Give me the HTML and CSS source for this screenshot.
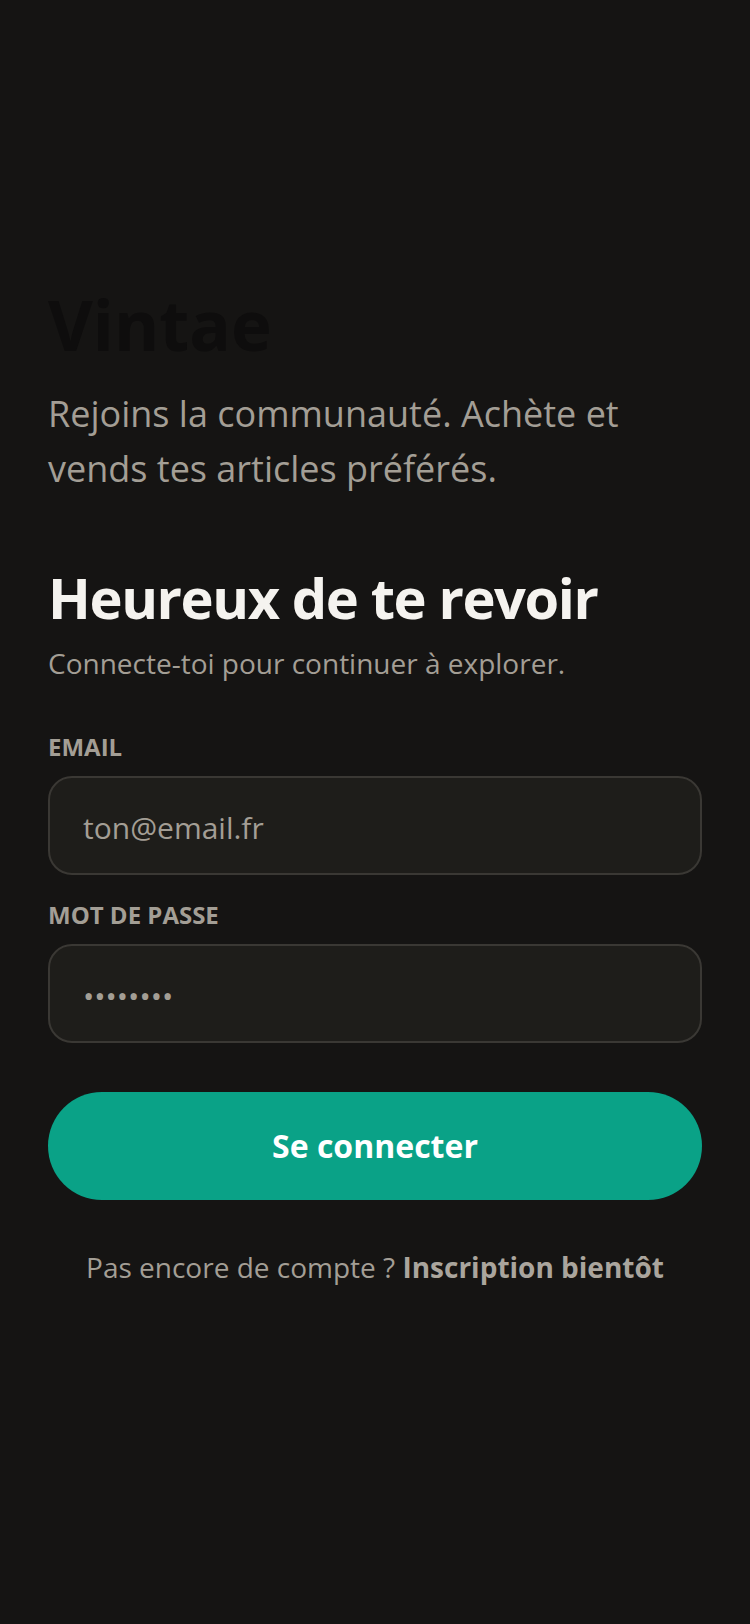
FILE: index.html
```html
<!DOCTYPE html>
<html lang="fr">
<head>
<meta charset="utf-8">
<title>Vintae – Connexion</title>
<link rel="stylesheet" href="styles.css">
</head>
<body>
<main class="page">
  <header class="brand">
    <h1 class="logo">Vintae</h1>
    <p class="tagline">Rejoins la communauté. Achète et vends tes articles préférés.</p>
  </header>
  <section class="login">
    <h2 class="title">Heureux de te revoir</h2>
    <p class="subtitle">Connecte-toi pour continuer à explorer.</p>
    <form class="form">
      <label class="field">
        <span class="label">EMAIL</span>
        <input class="input" type="email" placeholder="ton@email.fr">
      </label>
      <label class="field">
        <span class="label">MOT DE PASSE</span>
        <input class="input input-pass" type="password" value="12345678">
      </label>
      <button class="submit" type="button">Se connecter</button>
    </form>
    <p class="footer">Pas encore de compte ? <strong>Inscription bientôt</strong></p>
  </section>
</main>
</body>
</html>
```

FILE: styles.css
```css
* { box-sizing: border-box; }

html, body {
  margin: 0;
  padding: 0;
  background: #151413;
}

body {
  font-family: "Open Sans", "Noto Sans", sans-serif;
  color: #a39e95;
  width: 750px;
  min-height: 1624px;
}

.page {
  padding: 284px 48px 0;
  display: flex;
  flex-direction: column;
}

.brand {
  display: flex;
  flex-direction: column;
}

.logo {
  margin: 0;
  font-size: 69px;
  line-height: 80px;
  font-weight: 700;
  color: #0e0d0d;
}

.tagline {
  margin: 22px 0 0;
  font-size: 36px;
  line-height: 55px;
  color: #a39e95;
}

.login {
  margin-top: 68px;
  display: flex;
  flex-direction: column;
}

.title {
  margin: 0;
  font-size: 56px;
  line-height: 1.2;
  font-weight: 700;
  color: #f5f3ef;
  letter-spacing: -1.4px;
}

.subtitle {
  margin: 11px 0 0;
  font-size: 28px;
  line-height: 42px;
  color: #a39e95;
}

.form {
  margin-top: 49px;
  display: flex;
  flex-direction: column;
  gap: 26px;
}

.field {
  display: flex;
  flex-direction: column;
  gap: 14px;
}

.label {
  font-size: 24px;
  line-height: 1.2;
  font-weight: 700;
  color: #a39e95;
}

.input {
  height: 99px;
  width: 100%;
  padding: 4px 33px 0;
  border: 2px solid #3a3834;
  border-radius: 24px;
  background: #1e1d1a;
  font-family: "Open Sans", "Noto Sans", sans-serif;
  font-size: 30px;
  color: #a39e95;
  outline: none;
}

.input::placeholder {
  color: #a39e95;
  opacity: 1;
}

.input-pass {
  letter-spacing: 0;
}

.submit {
  margin-top: 23px;
  height: 108px;
  width: 100%;
  border: none;
  border-radius: 54px;
  background: #0aa287;
  color: #ffffff;
  font-family: "Open Sans", "Noto Sans", sans-serif;
  font-size: 32px;
  font-weight: 700;
}

.footer {
  margin: 48px 0 0;
  text-align: center;
  font-size: 28px;
  line-height: 1.4;
  color: #a39e95;
}

.footer strong {
  font-weight: 700;
  color: #aaa59d;
}
```
